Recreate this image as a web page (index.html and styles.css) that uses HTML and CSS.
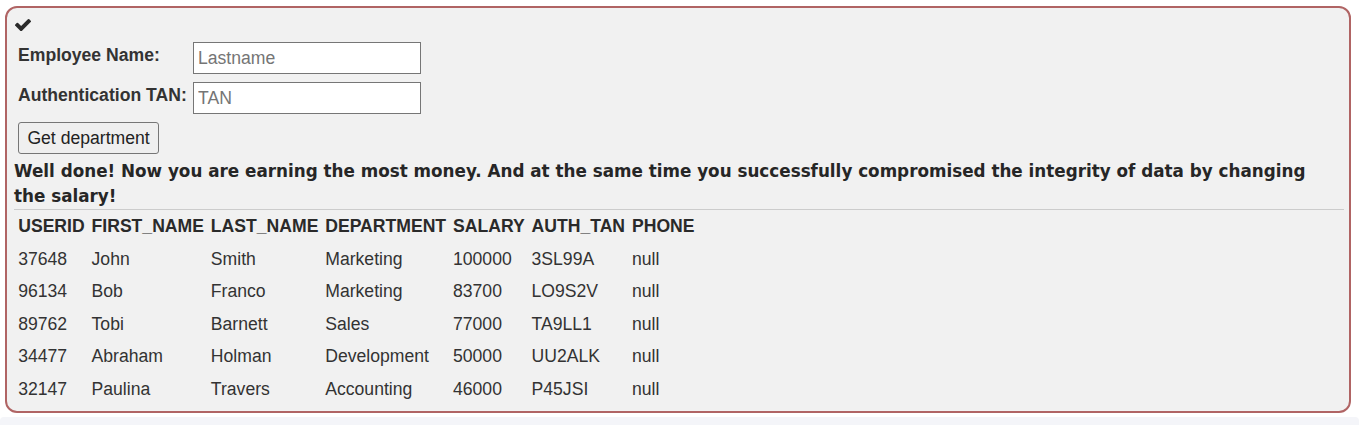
FILE: index.html
```html
<!DOCTYPE html>
<html>
<head>
<meta charset="utf-8">
<link rel="stylesheet" href="styles.css">
</head>
<body>
<div class="attack-box">
  <div class="check">
    <svg class="check-icon" viewBox="121 334 1550 1188" width="16" height="12.3"><path fill="#2b2b2b" d="M1671 566q0 40-28 68l-724 724-136 136q-28 28-68 28t-68-28l-136-136-362-362q-28-28-28-68t28-68l136-136q28-28 68-28t68 28l294 295 656-657q28-28 68-28t68 28l136 136q28 28 28 68z"/></svg>
  </div>
  <form class="form">
    <div class="form-row">
      <label class="label">Employee Name:</label>
      <input class="field" type="text" placeholder="Lastname">
    </div>
    <div class="form-row">
      <label class="label">Authentication TAN:</label>
      <input class="field" type="text" placeholder="TAN">
    </div>
    <button class="btn" type="button">Get department</button>
  </form>
  <div class="message">Well done! Now you are earning the most money. And at the same time you successfully compromised the integrity of data by changing the salary!</div>
  <hr class="rule">
  <table class="results">
    <tr><th>USERID</th><th>FIRST_NAME</th><th>LAST_NAME</th><th>DEPARTMENT</th><th>SALARY</th><th>AUTH_TAN</th><th>PHONE</th></tr>
    <tr><td>37648</td><td>John</td><td>Smith</td><td>Marketing</td><td>100000</td><td>3SL99A</td><td>null</td></tr>
    <tr><td>96134</td><td>Bob</td><td>Franco</td><td>Marketing</td><td>83700</td><td>LO9S2V</td><td>null</td></tr>
    <tr><td>89762</td><td>Tobi</td><td>Barnett</td><td>Sales</td><td>77000</td><td>TA9LL1</td><td>null</td></tr>
    <tr><td>34477</td><td>Abraham</td><td>Holman</td><td>Development</td><td>50000</td><td>UU2ALK</td><td>null</td></tr>
    <tr><td>32147</td><td>Paulina</td><td>Travers</td><td>Accounting</td><td>46000</td><td>P45JSI</td><td>null</td></tr>
  </table>
</div>
<div class="next-strip"></div>
</body>
</html>
```
FILE: styles.css
```css
html, body {
  margin: 0;
  padding: 0;
  background: #ffffff;
}
body {
  font-family: "Liberation Sans", Arial, sans-serif;
  font-size: 17.6px;
  color: #333333;
  overflow: hidden;
}
.attack-box {
  box-sizing: border-box;
  margin: 6px 0 0 5px;
  width: 1346px;
  height: 407px;
  border: 2px solid #b06464;
  border-radius: 12px;
  background: #f1f1f1;
  padding: 0 5px 0 7px;
}
.check {
  padding-top: 11px;
  margin-bottom: 11px;
}
.check-icon {
  display: block;
  margin-left: 1px;
}
.form {
  margin: 0 0 0 4px;
  display: flex;
  flex-direction: column;
  align-items: flex-start;
  gap: 8px;
}
.form-row {
  display: flex;
  align-items: flex-start;
}
.label {
  width: 175px;
  font-weight: bold;
  margin-top: 3px;
  line-height: 20.2px;
}
.field {
  box-sizing: border-box;
  width: 228px;
  height: 32px;
  margin: 0;
  padding: 0 4px;
  border: 1px solid #767676;
  border-radius: 0;
  background: #ffffff;
  font-family: "Liberation Sans", Arial, sans-serif;
  font-size: 17.6px;
  color: #333333;
}
.field::placeholder {
  color: #757575;
}
.btn {
  box-sizing: border-box;
  height: 32px;
  margin: 0;
  padding: 0 8.4px;
  border: 1px solid #767676;
  border-radius: 3px;
  background: #efefef;
  font-family: "Liberation Sans", Arial, sans-serif;
  font-size: 17.6px;
  color: #222222;
}
.message {
  margin-top: 4.6px;
  max-width: 1318px;
  font-family: "DejaVu Sans", Verdana, sans-serif;
  font-size: 16.8px;
  font-weight: bold;
  line-height: 25.17px;
  color: #262626;
}
.rule {
  margin: 0;
  border: 0;
  border-top: 1px solid #cccccc;
  height: 0;
}
.results {
  border-collapse: collapse;
  margin-left: 0.75px;
}
.results th,
.results td {
  text-align: left;
  padding: 6.25px 3.45px;
  line-height: 20px;
  white-space: nowrap;
}
.results th {
  font-weight: bold;
  color: #2a2a2a;
}
.next-strip {
  margin-top: 4px;
  height: 12px;
  background: #f4f5f9;
  border-radius: 4px 4px 0 0;
}
```
